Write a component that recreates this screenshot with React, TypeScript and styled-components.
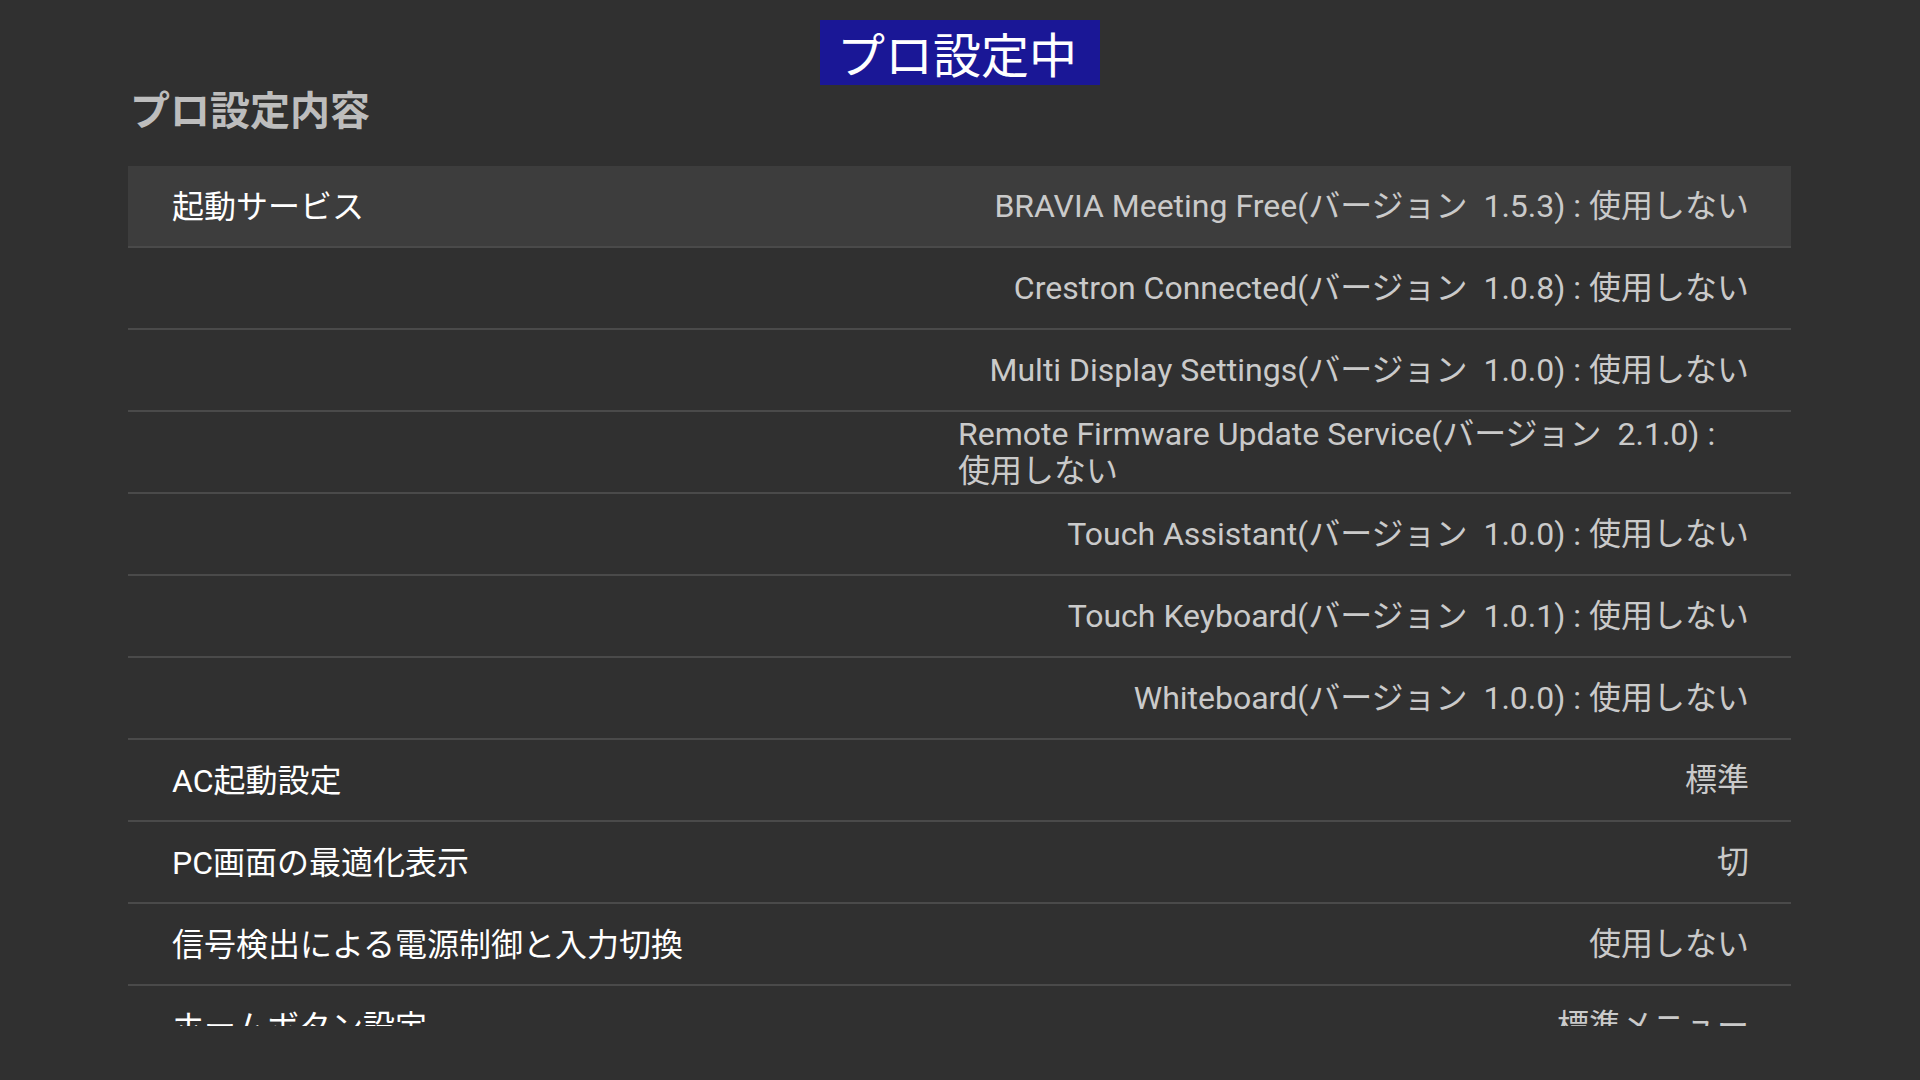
import React from "react";
import styled, { createGlobalStyle } from "styled-components";

const GlobalStyle = createGlobalStyle`
  html, body {
    margin: 0;
    padding: 0;
    background: #303030;
    overflow: hidden;
  }
  body {
    font-family: Roboto, "Noto Sans CJK JP", sans-serif;
  }
`;

const Page = styled.div`
  width: 1920px;
  height: 1080px;
  display: flex;
  flex-direction: column;
  padding-top: 20px;
  box-sizing: border-box;
  background: #303030;
`;

const Badge = styled.div`
  align-self: center;
  width: 280px;
  height: 65px;
  box-sizing: border-box;
  padding: 0 20px 0 14px;
  background: #1a1796;
  color: #ffffff;
  font-family: "Noto Sans CJK JP", sans-serif;
  font-size: 48px;
  line-height: 65px;
  text-align: center;
  white-space: nowrap;
`;

const Title = styled.h1`
  margin: 3px 0 0 130px;
  font-family: "Noto Sans CJK JP", sans-serif;
  font-weight: 700;
  font-size: 40px;
  line-height: 40px;
  color: #bdbdbd;
`;

const List = styled.div`
  margin: 38px 129px 0 128px;
  height: 860px;
  overflow: hidden;
  display: flex;
  flex-direction: column;
`;

const Row = styled.div<{ $focused?: boolean }>`
  flex: 0 0 auto;
  height: 82px;
  box-sizing: border-box;
  display: flex;
  align-items: center;
  justify-content: space-between;
  padding: 0 42px 0 44px;
  border-bottom: 2px solid #4a4a4a;
  background: ${(p) => (p.$focused ? "#3d3d3d" : "transparent")};
`;

const Label = styled.div`
  font-family: Roboto, "Noto Sans CJK JP", sans-serif;
  font-size: 32px;
  line-height: 37px;
  color: #ffffff;
  white-space: nowrap;
  margin-top: 2px;
`;

const Value = styled.div`
  margin-left: auto;
  margin-top: 1px;
  max-width: 791px;
  font-family: Roboto, "Noto Sans CJK JP", sans-serif;
  font-size: 32px;
  line-height: 37px;
  color: #cacaca;
  text-align: left;
  white-space: pre-wrap;
`;

type Item = { label?: string; value: string; focused?: boolean };

const items: Item[] = [
  { label: "起動サービス", value: "BRAVIA Meeting Free(バージョン  1.5.3) : 使用しない", focused: true },
  { value: "Crestron Connected(バージョン  1.0.8) : 使用しない" },
  { value: "Multi Display Settings(バージョン  1.0.0) : 使用しない" },
  { value: "Remote Firmware Update Service(バージョン  2.1.0) : 使用しない" },
  { value: "Touch Assistant(バージョン  1.0.0) : 使用しない" },
  { value: "Touch Keyboard(バージョン  1.0.1) : 使用しない" },
  { value: "Whiteboard(バージョン  1.0.0) : 使用しない" },
  { label: "AC起動設定", value: "標準" },
  { label: "PC画面の最適化表示", value: "切" },
  { label: "信号検出による電源制御と入力切換", value: "使用しない" },
  { label: "ホームボタン設定", value: "標準メニュー" },
];

export default function App() {
  return (
    <>
      <GlobalStyle />
      <Page>
        <Badge>プロ設定中</Badge>
        <Title>プロ設定内容</Title>
        <List>
          {items.map((it, i) => (
            <Row key={i} $focused={it.focused}>
              {it.label ? <Label>{it.label}</Label> : <span />}
              <Value>{it.value}</Value>
            </Row>
          ))}
        </List>
      </Page>
    </>
  );
}
